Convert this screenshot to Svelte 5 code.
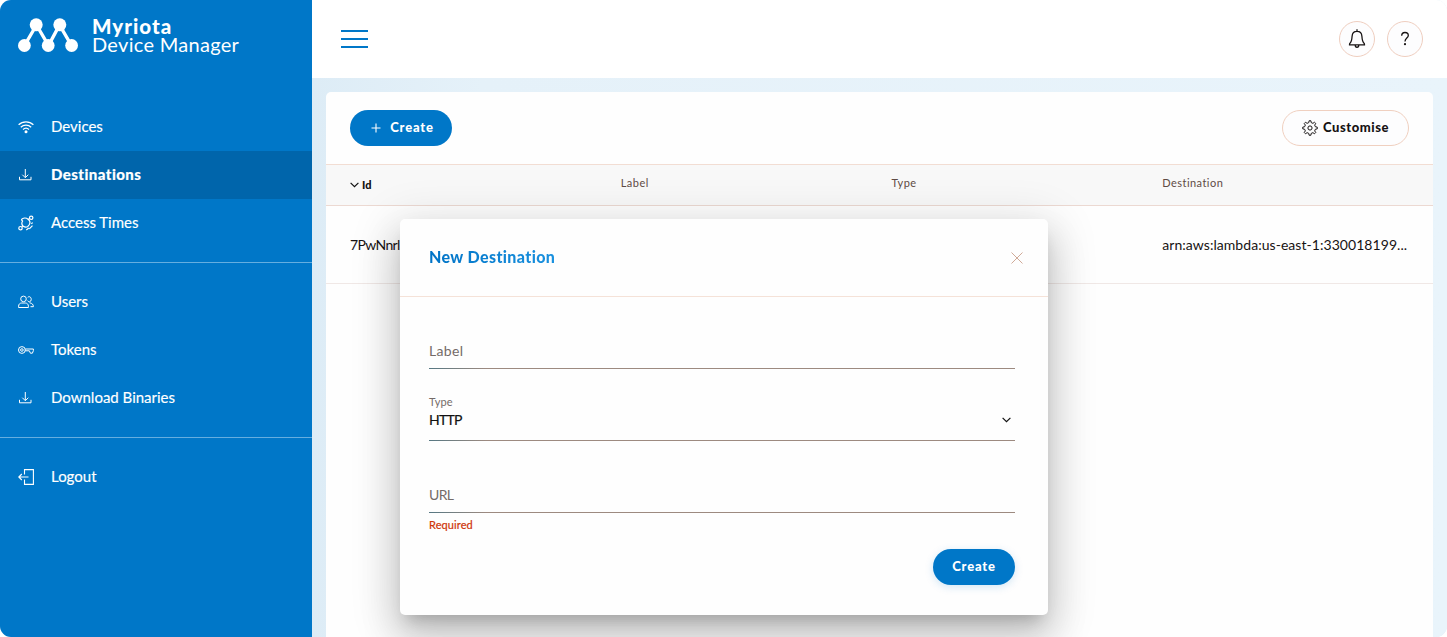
<script>
  const groups = [
    [
      { label: 'Devices', icon: 'wifi' },
      { label: 'Destinations', icon: 'download', active: true },
      { label: 'Access Times', icon: 'satellite' }
    ],
    [
      { label: 'Users', icon: 'users' },
      { label: 'Tokens', icon: 'key' },
      { label: 'Download Binaries', icon: 'download' }
    ],
    [{ label: 'Logout', icon: 'logout' }]
  ];

  // Outline of an eight-toothed cog centred on (8, 8).
  const cog = Array.from({ length: 8 }, (_, i) =>
    [[5.5, -13], [7.3, -7], [7.3, 7], [5.5, 13]].map(([r, offset]) => {
      const angle = ((i * 45 + offset) * Math.PI) / 180;
      return `${(8 + r * Math.cos(angle)).toFixed(2)},${(8 + r * Math.sin(angle)).toFixed(2)}`;
    }).join(' ')
  ).join(' ');
</script>

<div class="app">
  <aside>
    <div class="brand">
      <svg width="60" height="34" viewBox="0 0 60 34" fill="#fff" stroke="#fff">
        <path d="M6.500 27.500 18.500 7 30.500 27.500 41.500 7 53.500 27.500" fill="none" stroke-width="3.400" />
        <g stroke="none">
          <circle cx="6.400" cy="27.500" r="6.400" /><circle cx="30.200" cy="27.500" r="6.400" /><circle cx="53.600" cy="27.500" r="6.400" />
          <circle cx="18.200" cy="6.800" r="6.500" /><circle cx="41.800" cy="6.800" r="6.500" />
        </g>
      </svg>
      <div class="name"><b>Myriota</b><span>Device Manager</span></div>
    </div>
    <nav>
      {#each groups as group}
        <ul>
          {#each group as item}
            <li class:active={item.active}>
              <svg width="16" height="16" viewBox="0 0 16 16" fill="none" stroke="#fff" stroke-width="1">
                {#if item.icon === 'wifi'}
                  <path d="M.6 5.800a10.600 10.600 0 0 1 14.800 0M2.800 8.200a7.500 7.500 0 0 1 10.400 0M5 10.500a4.400 4.400 0 0 1 6 0" stroke-width="1.200" />
                  <circle cx="8" cy="12.700" r="1.500" fill="#fff" stroke="none" />
                {:else if item.icon === 'download'}
                  <path d="M7.300 2v8.500M4.300 7.700l3 3 3-3M1.500 9.800v3h11.500v-3" />
                {:else if item.icon === 'satellite'}
                  <g stroke-width="1.200">
                    <path d="M3.300 4.600C5 2.600 8.200 2.500 10 4.200M3.300 4.600 4.600 6C3.400 8 3.900 10 5.300 11.200M10 4.200l1.800-.6M10 4.200C11.800 5.500 12.300 7.800 11.400 9.500M11.400 9.500 9.900 11.400C8.500 12.300 6.700 12.200 5.300 11.200M5.300 11.200 3.800 12M8.300 15l2.500-2M11.300 13.800l3.200-3.200M13.300 8.800l1.400-1.200" />
                    <circle cx="13.200" cy="2.800" r="1.700" /><circle cx="2.500" cy="13.200" r="1.700" />
                  </g>
                {:else if item.icon === 'users'}
                  <circle cx="5.500" cy="4.900" r="2.800" /><path d="M.6 13.500v-1.300c0-2 1.300-3.200 3.100-3.200h3.600c1.800 0 3.100 1.200 3.100 3.200v1.300z" />
                  <path d="M9.700 3.300c2.200-2 4.600 1.100 3 3.800-1.100 1.500-2.600.6-3-.5M11.600 8.800c2.500.3 3.800 1.800 3.800 3.900h-2.900" />
                {:else if item.icon === 'key'}
                  <circle cx="3.900" cy="8" r="3.400" /><circle cx="3.900" cy="8" r="1.300" />
                  <path d="M7.200 7h8.200v1.600l-1 2.600h-2l-1-2.400H7.200" />
                {:else}
                  <path d="M6.500 5.500V.6h8.900v14.800H6.500v-4.900M.8 8h9.700M3.800 5l-3 3 3 3" stroke-width="1.100" />
                {/if}
              </svg>
              <span>{item.label}</span>
            </li>
          {/each}
        </ul>
      {/each}
    </nav>
  </aside>

  <main>
    <header>
      <div class="burger"><i></i><i></i><i></i></div>
      <div class="actions">
        <span class="round">
          <svg width="20" height="22" viewBox="0 0 20 22" fill="none" stroke="#171313" stroke-width="1.300">
            <path d="M10 1.200v2.200M10 3.400c-3 0-4.700 2.100-4.900 4.800-.3 3.800-.6 5.400-1.800 6.600-.8.700-.9 1.300-.8 2h15c.1-.7 0-1.300-.8-2-1.200-1.200-1.500-2.800-1.800-6.600-.2-2.700-1.900-4.800-4.900-4.800zM8.200 17c0 3 3.600 3 3.600 0" />
          </svg>
        </span>
        <span class="round">
          <svg width="10" height="16" viewBox="0 0 10 16" fill="none" stroke="#171313" stroke-width="1.300">
            <path d="M1.700 4.700c0-2.100 1.400-3.200 3.300-3.200s3.300 1.100 3.300 3c0 2.500-3.300 2.700-3.300 5.900" /><circle cx="5" cy="13.200" r="1.100" fill="#171313" stroke="none" />
          </svg>
        </span>
      </div>
    </header>

    <div class="content">
      <section class="card">
        <div class="toolbar">
          <button class="primary add">
            <svg width="10" height="10" viewBox="0 0 10 10" stroke="#fff" stroke-width="1.100"><path d="M5 .5v9M.5 5h9" /></svg>
            <span>Create</span>
          </button>
          <button class="customise">
            <svg width="16" height="16" viewBox="0 0 16 16" fill="none" stroke="#171313" stroke-width="1">
              <polygon points={cog} stroke-linejoin="round" /><circle cx="8" cy="8" r="2.100" />
            </svg>
            <span>Customise</span>
          </button>
        </div>
        <div class="row head">
          <div class="sorted">
            <svg width="9" height="6" viewBox="0 0 9 6" fill="none" stroke="#111" stroke-width="1.200"><path d="M.6.8 4.500 4.700 8.400.8" /></svg>Id
          </div>
          <div>Label</div><div>Type</div><div class="last">Destination</div>
        </div>
        <div class="row body">
          <div class="id">7PwNnrl</div><div></div><div></div><div class="arn">arn:aws:lambda:us-east-1:330018199...</div>
        </div>
      </section>
    </div>
  </main>

  <div class="modal">
    <div class="modal-head">
      <h2>New Destination</h2>
      <svg width="12" height="12" viewBox="0 0 12 12" stroke="#d0aa98" stroke-width="1"><path d="M.5.5l11 11M11.500.5l-11 11" /></svg>
    </div>
    <form>
      <div class="field"><span>Label</span></div>
      <div class="field select">
        <small>Type</small>
        <div class="value">
          <span>HTTP</span>
          <svg width="9" height="6" viewBox="0 0 9 6" fill="none" stroke="#111" stroke-width="1.200"><path d="M.6.8 4.500 4.700 8.400.8" /></svg>
        </div>
      </div>
      <div class="field"><span class="url">URL</span></div>
      <p>Required</p>
      <button type="button" class="primary submit"><span>Create</span></button>
    </form>
  </div>
</div>

<style>
  :global(body) { margin: 0; background: #fff; overflow: hidden; }
  .app, .app * { box-sizing: border-box; }
  .app {
    position: relative; display: flex; width: 1447px; height: 637px; overflow: hidden;
    border-radius: 11px; background: #e2eff8; font-family: Lato, "Liberation Sans", sans-serif; color: #171313;
  }
  aside { width: 312px; height: 637px; background: #0077c8; color: #fff; }
  .brand { display: flex; height: 103px; padding: 18px 0 0 18px; }
  .name { display: flex; flex-direction: column; margin: -1px 0 0 14px; }
  .name b { font-size: 20.5px; line-height: 18px; font-weight: 900; letter-spacing: 1px; }
  .name span { font-size: 20px; line-height: 18px; letter-spacing: .3px; }
  ul { list-style: none; margin: 0; padding: 0; }
  ul + ul { margin-top: 15px; padding-top: 15px; border-top: 1px solid #65aee0; }
  li { display: flex; align-items: center; height: 48px; padding-left: 18px; font-size: 15px; -webkit-text-stroke: .15px; }
  li svg { margin-right: 17px; }
  li span { padding-bottom: 2px; }
  li.active { background: #0065ab; font-weight: 900; letter-spacing: .45px; }
  main { flex: 1; display: flex; flex-direction: column; }
  header { display: flex; align-items: center; justify-content: space-between; height: 78px; padding: 0 24px 0 28.5px; background: #fff; }
  .burger { display: flex; flex-direction: column; gap: 6px; width: 27px; }
  .burger i { height: 2px; background: #0077c8; }
  .actions { display: flex; gap: 12px; }
  .round { display: flex; align-items: center; justify-content: center; width: 36px; height: 36px; border: 1px solid #efcebf; border-radius: 50%; background: #fdfdfe; }
  .content { flex: 1; padding: 14px 14px 0; background: linear-gradient(90deg, #ddecf6, #e5f1f9 15%, #e9f4fb); }
  .card { height: 100%; border-radius: 5px 5px 0 0; background: #fefefe; }
  .toolbar { display: flex; align-items: center; justify-content: space-between; height: 72px; padding: 0 24px; }
  button { display: flex; align-items: center; justify-content: center; height: 36px; padding: 0; border: 0; border-radius: 18px; font: 900 13px Lato, sans-serif; }
  button span { padding-bottom: 2px; }
  .primary { background: #0077c8; color: #fff; letter-spacing: .8px; }
  .add { width: 102px; gap: 9px; padding-left: 3px; }
  .customise { width: 127px; gap: 5px; border: 1px solid #f0d0c0; background: #fdfdfe; color: #171313; font-weight: 900; letter-spacing: .55px; }
  .row { display: grid; grid-template-columns: repeat(4, 270.75px); padding-left: 24px; }
  .head { height: 42px; padding-top: 11px; border-top: 1px solid #f2ddd3; border-bottom: 1px solid #ecd9d2; background: #f8f8f8; font-size: 11px; line-height: 13px; letter-spacing: .46px; color: #5f4b45; }
  .sorted { display: flex; align-items: center; gap: 3px; height: 17px; font-weight: 900; letter-spacing: .2px; color: #111; }
  .body { align-items: center; height: 78px; border-bottom: 1px solid #f0e8e6; font-size: 14px; letter-spacing: .05px; }
  .id { letter-spacing: -.65px; }
  .modal {
    position: absolute; left: 400px; top: 219px; width: 648px; height: 396px; border-radius: 5px; background: #fefefe;
    box-shadow: 0 11px 15px -7px rgba(0,0,0,.2), 0 24px 38px 3px rgba(0,0,0,.14), 0 9px 46px 8px rgba(0,0,0,.12);
  }
  .modal-head { display: flex; align-items: center; justify-content: space-between; height: 78px; padding: 0 25px 0 29px; border-bottom: 1px solid #f5e2d8; }
  h2 { margin: 0; padding-bottom: 1px; font-size: 16px; line-height: 20px; font-weight: 900; letter-spacing: .38px; background: linear-gradient(90deg, #0073c6, #1a91df); background-clip: text; color: transparent; }
  form { display: flex; flex-direction: column; padding: 0 33px 0 29px; }
  .field { display: flex; flex-direction: column; justify-content: flex-end; height: 72px; padding-bottom: 8px; border-bottom: 1px solid; border-image: linear-gradient(90deg, #557783, #9d8a80 10%) 1; font-size: 14px; line-height: 18px; letter-spacing: .35px; color: #746b68; }
  .url { letter-spacing: -.6px; }
  .select { padding-bottom: 10px; }
  small { font-size: 11px; line-height: 16px; letter-spacing: .1px; }
  .value { display: flex; align-items: center; justify-content: space-between; padding-right: 4.500px; line-height: 20px; color: #111; letter-spacing: -.7px; -webkit-text-stroke: .2px; }
  p { margin: 4px 0 0; height: 15px; font-size: 11px; line-height: 15px; letter-spacing: .1px; color: #cf3508; -webkit-text-stroke: .2px; }
  .submit { align-self: flex-end; width: 82px; margin-top: 17px; box-shadow: 0 2px 8px rgba(0, 119, 200, .18); }
</style>
